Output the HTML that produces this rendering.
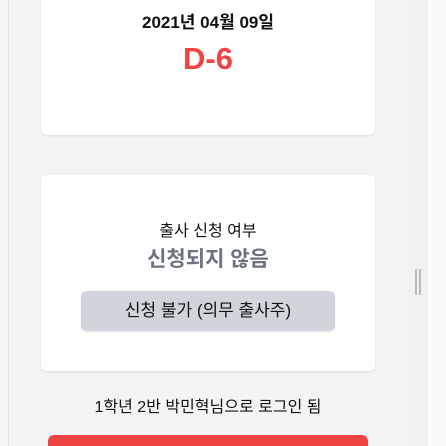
<!DOCTYPE html>
<html style="overflow:hidden;height:446px"><head><meta charset="utf-8"><style>
body{margin:0;width:446px;height:446px;overflow:hidden;background:#fafafa;font-family:"Liberation Sans","Noto Sans CJK KR",sans-serif;position:relative}
.l{position:absolute;left:0;top:0;width:8px;height:446px;background:#f7f7f7}
.p{position:absolute;left:8px;top:0;width:400px;height:446px;background:#f3f4f6;border-left:1px solid #e5e5e5;border-right:1px solid #e2e2e2}
.r{position:absolute;left:409px;top:0;width:19px;height:446px;background:#f1f1f1}
.c{position:absolute;left:41px;width:334px;background:#fff;border-radius:6px;box-shadow:0 1px 2px rgba(0,0,0,.1);text-align:center}
.t{position:absolute;left:0;width:100%;text-align:center;white-space:nowrap}
</style></head><body>
<div class="l"></div><div class="p"></div><div class="r"></div>
<div style="position:absolute;left:415px;top:269px;width:2px;height:26px;background:#bbb"></div>
<div style="position:absolute;left:419px;top:269px;width:2px;height:26px;background:#bbb"></div>
<div class="c" style="top:-6px;height:141px">
<div class="t" style="top:14px;font-size:17px;font-weight:bold;color:#111">2021년 04월 09일</div>
<div class="t" style="top:47px;font-size:31px;font-weight:bold;color:#ef4444">D-6</div>
</div>
<div class="c" style="top:175px;height:196px">
<div class="t" style="top:42px;font-size:16px;color:#111">출사 신청 여부</div>
<div class="t" style="top:68px;font-size:21px;font-weight:bold;color:#6b7280">신청되지 않음</div>
<div style="position:absolute;left:40px;top:116px;width:254px;height:40px;background:#d1d5db;border-radius:6px;box-shadow:0 1px 2px rgba(0,0,0,.1);line-height:40px;font-size:17px;color:#111">신청 불가 (의무 출사주)</div>
</div>
<div class="t" style="top:393px;left:0;width:416px;font-size:16px;color:#111">1학년 2반 박민혁님으로 로그인 됨</div>
<div style="position:absolute;left:48px;top:435px;width:320px;height:11px;background:#ef4444;border-radius:6px 6px 0 0"></div>
</body></html>
